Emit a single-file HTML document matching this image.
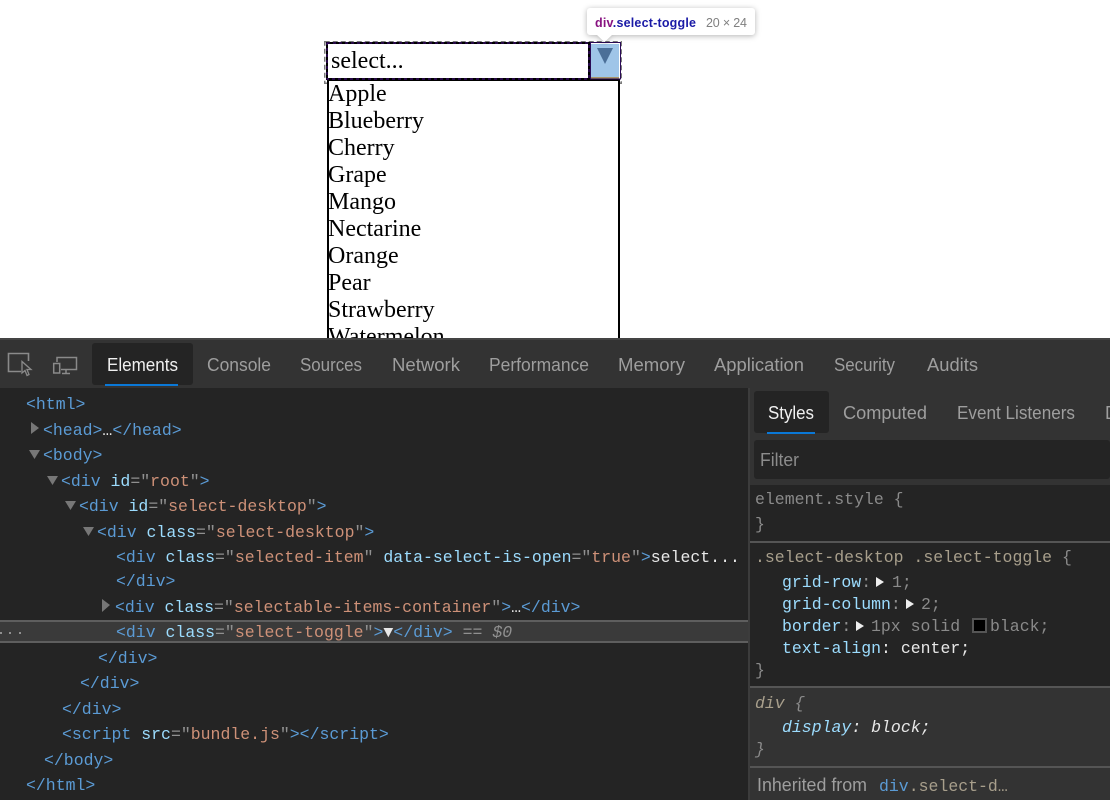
<!DOCTYPE html>
<html><head><meta charset="utf-8"><style>
html,body{margin:0;padding:0;width:1110px;height:800px;overflow:hidden;background:#fff}
svg{display:block}
text{white-space:pre}
.s{font-family:"Liberation Serif",serif;font-size:24px;fill:#000}
.t{font-family:"Liberation Sans",sans-serif;font-size:18px;fill:#9e9e9e}
.m{font-family:"Liberation Mono",monospace;font-size:16.5px;fill:#8a8a8a}
.g{fill:#5b9bd5}.a{fill:#9cdcfe}.v{fill:#ce9178}.p{fill:#909090}.w{fill:#e8e8e8}
.sel{fill:#a89f8c}.b{fill:#8a8a8a}.i{font-style:italic}
.tr{fill:#777}
.tip{filter:drop-shadow(0 1px 3px rgba(0,0,0,.3))}
</style></head><body>
<svg width="1110" height="800" viewBox="0 0 1110 800" xmlns="http://www.w3.org/2000/svg">
<rect width="1110" height="800" fill="#fff"/>
<!-- page -->
<rect x="324.750" y="41.750" width="296.500" height="41.500" fill="none" stroke="#7a7a7a" stroke-width="1.500" stroke-dasharray="5 3"/>
<rect x="328" y="80" width="291" height="270" fill="#fff" stroke="#000" stroke-width="2"/>
<rect x="327" y="43" width="262" height="36" fill="#fff" stroke="#000" stroke-width="2"/>
<rect x="327" y="43" width="262" height="36" fill="none" stroke="#4a0f8a" stroke-width="1" stroke-dasharray="3 3"/>
<rect x="591" y="44" width="28" height="33" fill="#9fc5e8"/>
<rect x="591" y="77" width="28" height="2" fill="#a89468"/>
<rect x="590.500" y="42.500" width="30" height="36.500" fill="none" stroke="#2a0a55" stroke-width="1"/>
<path d="M597 48H613L605 64Z" fill="#4b6f98"/>
<text class="s" x="331" y="68">select...</text>
<text class="s" x="328" y="101">Apple</text>
<text class="s" x="328" y="128">Blueberry</text>
<text class="s" x="328" y="155">Cherry</text>
<text class="s" x="328" y="182">Grape</text>
<text class="s" x="328" y="209">Mango</text>
<text class="s" x="328" y="236">Nectarine</text>
<text class="s" x="328" y="263">Orange</text>
<text class="s" x="328" y="290">Pear</text>
<text class="s" x="328" y="317">Strawberry</text>
<text class="s" x="328" y="344">Watermelon</text>
<!-- tooltip -->
<path class="tip" d="M590 8H752A3 3 0 0 1 755 11V32A3 3 0 0 1 752 35H612L604.500 42L597 35H590A3 3 0 0 1 587 32V11A3 3 0 0 1 590 8Z" fill="#fff"/>
<text x="595" y="27" font-family="Liberation Sans" font-size="12.500" font-weight="700" textLength="101" lengthAdjust="spacing"><tspan fill="#881280">div</tspan><tspan fill="#1a1aa6">.select-toggle</tspan></text>
<text x="706" y="27" font-family="Liberation Sans" font-size="12.500" fill="#808080" textLength="41" lengthAdjust="spacing">20 × 24</text>

<!-- devtools -->
<rect x="0" y="338" width="1110" height="462" fill="#242424"/>
<rect x="0" y="338" width="1110" height="50" fill="#333"/>
<rect x="0" y="338" width="1110" height="2" fill="#444"/>
<path d="M28.500 361V353.500H8.500V371.500H21" fill="none" stroke="#8a8a8a" stroke-width="1.600"/>
<path d="M22 361.500V373L25 370.500L27 375.500L29 374.500L27 369.500H31Z" fill="#333" stroke="#8a8a8a" stroke-width="1.300"/>
<path d="M57 362V357.500H76.500V369.500H61M66 370V373M62 373.500H70" fill="none" stroke="#8a8a8a" stroke-width="1.500"/>
<rect x="53.700" y="363.500" width="6" height="9.500" fill="none" stroke="#8a8a8a" stroke-width="1.500"/>
<rect x="92" y="343" width="101" height="42" rx="3" fill="#242424"/>
<rect x="105" y="384" width="73" height="2" fill="#0a78d7"/>
<text class="t" x="107" y="371" style="fill:#f0f0f0" textLength="71" lengthAdjust="spacingAndGlyphs">Elements</text>
<text class="t" x="207" y="371" textLength="64" lengthAdjust="spacingAndGlyphs">Console</text>
<text class="t" x="300" y="371" textLength="62" lengthAdjust="spacingAndGlyphs">Sources</text>
<text class="t" x="392" y="371" textLength="68" lengthAdjust="spacingAndGlyphs">Network</text>
<text class="t" x="489" y="371" textLength="100" lengthAdjust="spacingAndGlyphs">Performance</text>
<text class="t" x="618" y="371" textLength="67" lengthAdjust="spacingAndGlyphs">Memory</text>
<text class="t" x="714" y="371" textLength="90" lengthAdjust="spacingAndGlyphs">Application</text>
<text class="t" x="834" y="371" textLength="61" lengthAdjust="spacingAndGlyphs">Security</text>
<text class="t" x="927" y="371" textLength="51" lengthAdjust="spacingAndGlyphs">Audits</text>

<!-- selected row -->
<rect x="0" y="620" width="748" height="23" fill="#3a3a3a"/>
<rect x="0" y="620" width="748" height="2" fill="#5e5e5e"/>
<rect x="0" y="641" width="748" height="2" fill="#5e5e5e"/>
<g fill="#909090"><rect x="0" y="632" width="2" height="2"/><rect x="9" y="632" width="2" height="2"/><rect x="19" y="632" width="2" height="2"/></g>

<!-- arrows -->
<g class="tr">
<path d="M31 422L39 428L31 434Z"/>
<path d="M29 450H40L34.500 459Z"/>
<path d="M47 476H58L52.500 485Z"/>
<path d="M65 501H76L70.500 510Z"/>
<path d="M83 527H94L88.500 536Z"/>
<path d="M102 599L110 605L102 612Z"/>
</g>

<!-- tree -->
<g transform="translate(0 -1)">
<text class="m" x="26" y="410"><tspan class="g">&lt;html&gt;</tspan></text>
<text class="m" x="43" y="436"><tspan class="g">&lt;head&gt;</tspan><tspan class="w">…</tspan><tspan class="g">&lt;/head&gt;</tspan></text>
<text class="m" x="43" y="461"><tspan class="g">&lt;body&gt;</tspan></text>
<text class="m" x="61" y="487"><tspan class="g">&lt;div </tspan><tspan class="a">id</tspan><tspan class="p">="</tspan><tspan class="v">root</tspan><tspan class="p">"</tspan><tspan class="g">&gt;</tspan></text>
<text class="m" x="79" y="512"><tspan class="g">&lt;div </tspan><tspan class="a">id</tspan><tspan class="p">="</tspan><tspan class="v">select-desktop</tspan><tspan class="p">"</tspan><tspan class="g">&gt;</tspan></text>
<text class="m" x="97" y="538"><tspan class="g">&lt;div </tspan><tspan class="a">class</tspan><tspan class="p">="</tspan><tspan class="v">select-desktop</tspan><tspan class="p">"</tspan><tspan class="g">&gt;</tspan></text>
<text class="m" x="116" y="563"><tspan class="g">&lt;div </tspan><tspan class="a">class</tspan><tspan class="p">="</tspan><tspan class="v">selected-item</tspan><tspan class="p">"</tspan> <tspan class="a">data-select-is-open</tspan><tspan class="p">="</tspan><tspan class="v">true</tspan><tspan class="p">"</tspan><tspan class="g">&gt;</tspan><tspan class="w">select...</tspan></text>
<text class="m" x="116" y="587"><tspan class="g">&lt;/div&gt;</tspan></text>
<text class="m" x="115" y="613"><tspan class="g">&lt;div </tspan><tspan class="a">class</tspan><tspan class="p">="</tspan><tspan class="v">selectable-items-container</tspan><tspan class="p">"</tspan><tspan class="g">&gt;</tspan><tspan class="w">…</tspan><tspan class="g">&lt;/div&gt;</tspan></text>
<text class="m" x="116" y="638"><tspan class="g">&lt;div </tspan><tspan class="a">class</tspan><tspan class="p">="</tspan><tspan class="v">select-toggle</tspan><tspan class="p">"</tspan><tspan class="g">&gt;</tspan><tspan class="w">▼</tspan><tspan class="g">&lt;/div&gt;</tspan><tspan class="p"> == </tspan><tspan class="p i">$0</tspan></text>
<text class="m" x="98" y="664"><tspan class="g">&lt;/div&gt;</tspan></text>
<text class="m" x="80" y="689"><tspan class="g">&lt;/div&gt;</tspan></text>
<text class="m" x="62" y="715"><tspan class="g">&lt;/div&gt;</tspan></text>
<text class="m" x="62" y="740"><tspan class="g">&lt;script </tspan><tspan class="a">src</tspan><tspan class="p">="</tspan><tspan class="v">bundle.js</tspan><tspan class="p">"</tspan><tspan class="g">&gt;&lt;/script&gt;</tspan></text>
<text class="m" x="44" y="766"><tspan class="g">&lt;/body&gt;</tspan></text>
<text class="m" x="26" y="791"><tspan class="g">&lt;/html&gt;</tspan></text>
</g>

<!-- right pane -->
<rect x="748" y="388" width="362" height="412" fill="#242424"/>
<rect x="748" y="388" width="2" height="412" fill="#3c3c3c"/>
<rect x="750" y="388" width="360" height="97" fill="#333"/>
<rect x="754" y="391" width="75" height="42" rx="3" fill="#242424"/>
<rect x="767" y="432" width="48" height="2" fill="#0a78d7"/>
<text class="t" x="768" y="419" style="fill:#f0f0f0" textLength="46" lengthAdjust="spacingAndGlyphs">Styles</text>
<text class="t" x="843" y="419" textLength="84" lengthAdjust="spacingAndGlyphs">Computed</text>
<text class="t" x="957" y="419" textLength="118" lengthAdjust="spacingAndGlyphs">Event Listeners</text>
<text class="t" x="1105" y="419">D</text>
<rect x="754" y="440" width="356" height="39" rx="3" fill="#242424"/>
<text class="t" x="760" y="466" style="fill:#8c8c8c" textLength="39" lengthAdjust="spacingAndGlyphs">Filter</text>
<rect x="750" y="485" width="360" height="56" fill="#242424"/>
<rect x="750" y="541" width="360" height="2" fill="#555"/>
<rect x="750" y="543" width="360" height="143" fill="#242424"/>
<rect x="750" y="686" width="360" height="2" fill="#555"/>
<rect x="750" y="688" width="360" height="78" fill="#333"/>
<rect x="750" y="766" width="360" height="2" fill="#555"/>
<rect x="750" y="768" width="360" height="32" fill="#333"/>

<path d="M876 577L884 582L876 587Z" fill="#eee"/>
<path d="M906 599L914 604L906 609Z" fill="#eee"/>
<path d="M856 621L864 626L856 631Z" fill="#eee"/>
<rect x="973" y="619" width="13" height="13" fill="#000" stroke="#555" stroke-width="2"/>
<g transform="translate(0 -1)">
<text class="m" x="755" y="505">element.style {</text>
<text class="m" x="755" y="530">}</text>
<text class="m" x="755" y="563"><tspan class="sel">.select-desktop .select-toggle</tspan> {</text>
<text class="m" x="782" y="588"><tspan class="a">grid-row</tspan><tspan class="p">:</tspan></text>
<text class="m" x="892" y="588">1;</text>
<text class="m" x="782" y="610"><tspan class="a">grid-column</tspan><tspan class="p">:</tspan></text>
<text class="m" x="921" y="610">2;</text>
<text class="m" x="782" y="632"><tspan class="a">border</tspan><tspan class="p">:</tspan></text>
<text class="m" x="871" y="632">1px solid</text>
<text class="m" x="990" y="632">black;</text>
<text class="m" x="782" y="654"><tspan class="a">text-align</tspan><tspan class="w">: center;</tspan></text>
<text class="m" x="755" y="676">}</text>
<text class="m i" x="755" y="709"><tspan class="sel">div</tspan> {</text>
<text class="m i" x="782" y="733"><tspan class="a">display</tspan><tspan class="w">: block;</tspan></text>
<text class="m i" x="755" y="755">}</text>
<text class="m" x="879" y="792"><tspan class="g">div</tspan><tspan class="sel">.select-d…</tspan></text>
</g>
<text class="t" x="757" y="791" textLength="110" lengthAdjust="spacingAndGlyphs">Inherited from</text>
</svg>
</body></html>
